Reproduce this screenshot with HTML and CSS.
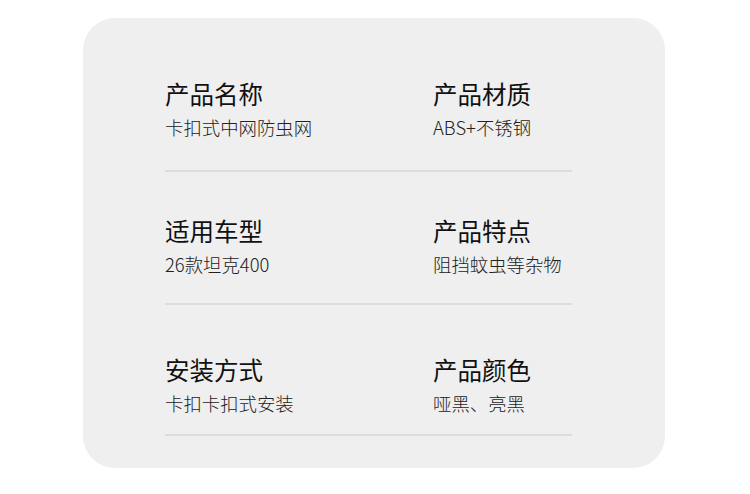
FILE: index.html
```html
<!DOCTYPE html>
<html lang="zh-CN">
<head>
  <meta charset="UTF-8">
  <meta name="viewport" content="width=device-width, initial-scale=1.0">
  <title>产品参数</title>
  <link rel="stylesheet" href="styles.css">
</head>
<body>
  <div class="card">
    <div class="row">
      <div class="item">
        <h2>产品名称</h2>
        <p>卡扣式中网防虫网</p>
      </div>
      <div class="item">
        <h2>产品材质</h2>
        <p>ABS+不锈钢</p>
      </div>
    </div>
    <div class="row">
      <div class="item">
        <h2>适用车型</h2>
        <p>26款坦克400</p>
      </div>
      <div class="item">
        <h2>产品特点</h2>
        <p>阻挡蚊虫等杂物</p>
      </div>
    </div>
    <div class="row">
      <div class="item">
        <h2>安装方式</h2>
        <p>卡扣卡扣式安装</p>
      </div>
      <div class="item">
        <h2>产品颜色</h2>
        <p>哑黑、亮黑</p>
      </div>
    </div>
  </div>
</body>
</html>
```

FILE: styles.css
```css
body {
  background: #ffffff;
  font-family: "Noto Sans CJK SC", "Noto Sans", sans-serif;
  margin: 0;
  padding: 0;
}
.card {
  background: #efefef;
  border-radius: 32px;
  width: 582px;
  height: 450px;
  box-sizing: border-box;
  margin: 18px 0 0 83px;
  padding: 61px 0 0 82px;
}
.row {
  display: flex;
  width: 407px;
  border-bottom: 2px solid #dcdcdc;
  padding-bottom: 31px;
}
.row + .row {
  margin-top: 44px;
}
.row:nth-child(2) {
  padding-bottom: 27px;
}
.row:nth-child(3) {
  margin-top: 50px;
  padding-bottom: 19px;
}
.item {
  width: 268px;
}
.item + .item {
  width: auto;
}
h2 {
  margin: 0;
  font-size: 24.5px;
  line-height: 30px;
  font-weight: 400;
  color: #111;
}
p {
  margin: 6px 0 0;
  font-size: 18.4px;
  line-height: 24px;
  font-weight: 300;
  color: #222;
}
```
